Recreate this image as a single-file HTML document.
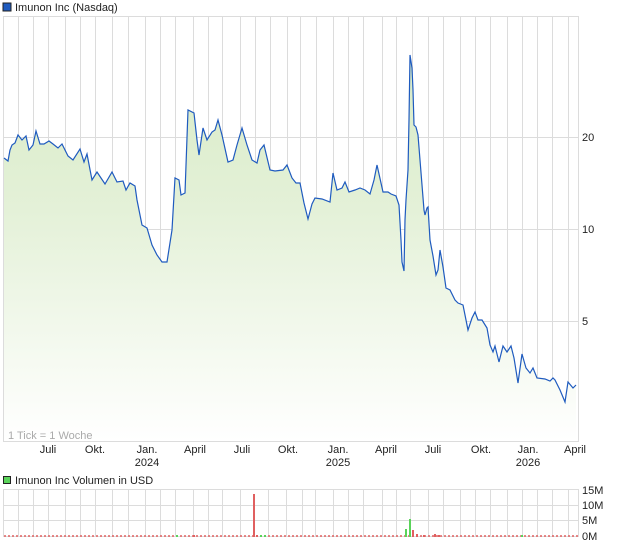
<!DOCTYPE html>
<html><head><meta charset="utf-8"><style>
html,body{margin:0;padding:0;background:#fff;}
svg{display:block;font-family:"Liberation Sans",sans-serif;}
</style></head><body>
<svg width="620" height="546" viewBox="0 0 620 546" xmlns="http://www.w3.org/2000/svg">
<defs>
<linearGradient id="g" x1="0" y1="0" x2="0" y2="1">
<stop offset="0" stop-color="#d8ebc6"/><stop offset="0.4" stop-color="#e4f1d8"/><stop offset="1" stop-color="#ffffff"/>
</linearGradient>
</defs>
<rect x="3" y="3" width="8" height="8" fill="#1f5bbf" stroke="#222" stroke-width="1"/>
<text x="15" y="11" font-size="11" fill="#222">Imunon Inc (Nasdaq)</text>
<g stroke="#dcdcdc" stroke-width="1">
<rect x="3.5" y="16.5" width="575" height="425" fill="none"/>
<path d="M18.5 16V441M33.5 16V441M48.5 16V441M65.5 16V441M80.5 16V441M95.5 16V441M112.5 16V441M128.5 16V441M145.5 16V441M160.5 16V441M175.5 16V441M193.5 16V441M208.5 16V441M222.5 16V441M240.5 16V441M255.5 16V441M270.5 16V441M287.5 16V441M300.5 16V441M316.5 16V441M333.5 16V441M348.5 16V441M363.5 16V441M382.5 16V441M396.5 16V441M412.5 16V441M428.5 16V441M443.5 16V441M460.5 16V441M475.5 16V441M490.5 16V441M507.5 16V441M522.5 16V441M537.5 16V441M552.5 16V441M568.5 16V441"/>
<path d="M3 137.5H579M3 229.5H579M3 321.5H579"/>
</g>
<path fill="url(#g)" stroke="none" d="M4 158L8 161L10 150L12 145L15 143L18 135L22 140L26 136L29 150L33 145L36 131L40 144L44 144L49 141L53 144L58 148L62 144L68 156L73 160L80 149L84 162L87 154L92 180L97 172L105 184L112 172L117 182L123 181L126 190L130 183L135 186L137 200L142 225L147 228L152 245L157 255L162 262L167 262L172 230L175 178L179 180L181 195L185 193L188 110L194 113L197 140L199 155L203 128L207 140L212 132L215 130L218 120L222 135L228 162L233 160L237 145L242 128L247 145L252 160L257 163L260 150L264 145L270 170L275 171L283 170L287 165L292 178L296 183L300 183L304 203L308 219L312 204L315 198L322 199L330 202L333 173L337 190L342 188L345 182L349 192L355 190L360 188L365 190L370 194L374 180L377 165L383 192L388 192L391 194L396 196L399 205L401 240L402 262L404 271L405 220L406 200L408 170L409 120L410 55L412 68L413 90L414 125L416 127L418 135L420 160L422 185L424 210L425 215L427 208L428 207L430 240L433 256L436 275L438 270L440 250L443 267L446 288L450 290L455 300L458 303L463 305L465 315L468 330L472 318L475 312L478 320L482 320L487 328L490 345L493 352L495 346L499 362L503 346L507 352L511 346L514 358L518 383L522 354L526 368L530 373L533 368L537 378L545 379L550 381L553 378L555 380L560 390L565 402L568 382L573 388L576 385L576 441L4 441Z"/>
<path fill="none" stroke="#1f5bbf" stroke-width="1.2" d="M4 158L8 161L10 150L12 145L15 143L18 135L22 140L26 136L29 150L33 145L36 131L40 144L44 144L49 141L53 144L58 148L62 144L68 156L73 160L80 149L84 162L87 154L92 180L97 172L105 184L112 172L117 182L123 181L126 190L130 183L135 186L137 200L142 225L147 228L152 245L157 255L162 262L167 262L172 230L175 178L179 180L181 195L185 193L188 110L194 113L197 140L199 155L203 128L207 140L212 132L215 130L218 120L222 135L228 162L233 160L237 145L242 128L247 145L252 160L257 163L260 150L264 145L270 170L275 171L283 170L287 165L292 178L296 183L300 183L304 203L308 219L312 204L315 198L322 199L330 202L333 173L337 190L342 188L345 182L349 192L355 190L360 188L365 190L370 194L374 180L377 165L383 192L388 192L391 194L396 196L399 205L401 240L402 262L404 271L405 220L406 200L408 170L409 120L410 55L412 68L413 90L414 125L416 127L418 135L420 160L422 185L424 210L425 215L427 208L428 207L430 240L433 256L436 275L438 270L440 250L443 267L446 288L450 290L455 300L458 303L463 305L465 315L468 330L472 318L475 312L478 320L482 320L487 328L490 345L493 352L495 346L499 362L503 346L507 352L511 346L514 358L518 383L522 354L526 368L530 373L533 368L537 378L545 379L550 381L553 378L555 380L560 390L565 402L568 382L573 388L576 385"/>
<g font-size="11" fill="#222">
<text x="582" y="141">20</text><text x="582" y="233">10</text><text x="582" y="325">5</text>
</g>
<text x="8" y="439" font-size="11" fill="#aaa">1 Tick = 1 Woche</text>
<g font-size="11" fill="#222" text-anchor="middle">
<text x="48" y="453">Juli</text><text x="95" y="453">Okt.</text><text x="147" y="453">Jan.</text><text x="147" y="466">2024</text>
<text x="195" y="453">April</text><text x="242" y="453">Juli</text><text x="288" y="453">Okt.</text><text x="338" y="453">Jan.</text><text x="338" y="466">2025</text>
<text x="386" y="453">April</text><text x="433" y="453">Juli</text><text x="481" y="453">Okt.</text><text x="528" y="453">Jan.</text><text x="528" y="466">2026</text>
<text x="575" y="453">April</text>
</g>
<rect x="3.5" y="476.5" width="7" height="7" fill="#5ad35a" stroke="#222" stroke-width="1"/>
<text x="15" y="484" font-size="11" fill="#222">Imunon Inc Volumen in USD</text>
<g stroke="#dcdcdc" stroke-width="1">
<rect x="3.5" y="489.5" width="575" height="47" fill="none"/>
<path d="M3 505.5H579M3 520.5H579M18.5 489V536M33.5 489V536M48.5 489V536M65.5 489V536M80.5 489V536M95.5 489V536M112.5 489V536M128.5 489V536M145.5 489V536M160.5 489V536M175.5 489V536M193.5 489V536M208.5 489V536M222.5 489V536M240.5 489V536M268.5 489V536M286.5 489V536M302.5 489V536M315.5 489V536M333.5 489V536M348.5 489V536M363.5 489V536M382.5 489V536M396.5 489V536M410.5 489V536M428.5 489V536M443.5 489V536M460.5 489V536M475.5 489V536M490.5 489V536M507.5 489V536M522.5 489V536M537.5 489V536M552.5 489V536M568.5 489V536"/>
</g>
<path d="M4 536H578" stroke="#e06060" stroke-width="1.5" stroke-dasharray="2 2"/>
<g>
<rect x="253" y="494" width="2" height="43" fill="#e06060"/>
<rect x="256" y="535" width="2" height="2" fill="#e06060"/>
<rect x="260" y="535" width="2" height="2" fill="#5ad35a"/>
<rect x="264" y="535" width="2" height="2" fill="#5ad35a"/>
<rect x="405" y="529" width="2" height="8" fill="#5ad35a"/>
<rect x="409" y="519" width="2" height="18" fill="#5ad35a"/>
<rect x="412" y="530" width="2" height="7" fill="#e06060"/>
<rect x="416" y="534" width="2" height="3" fill="#e06060"/>
<rect x="423" y="535" width="2" height="2" fill="#e06060"/>
<rect x="434" y="534" width="2" height="3" fill="#e06060"/>
<rect x="438" y="535" width="2" height="2" fill="#e06060"/>
<rect x="176" y="535" width="2" height="2" fill="#5ad35a"/>
<rect x="193" y="535" width="2" height="2" fill="#e06060"/>
<rect x="521" y="535" width="2" height="2" fill="#5ad35a"/>
</g>
<g font-size="11" fill="#222">
<text x="582" y="494">15M</text><text x="582" y="509">10M</text><text x="582" y="524">5M</text><text x="582" y="540">0M</text>
</g>
</svg>
</body></html>
